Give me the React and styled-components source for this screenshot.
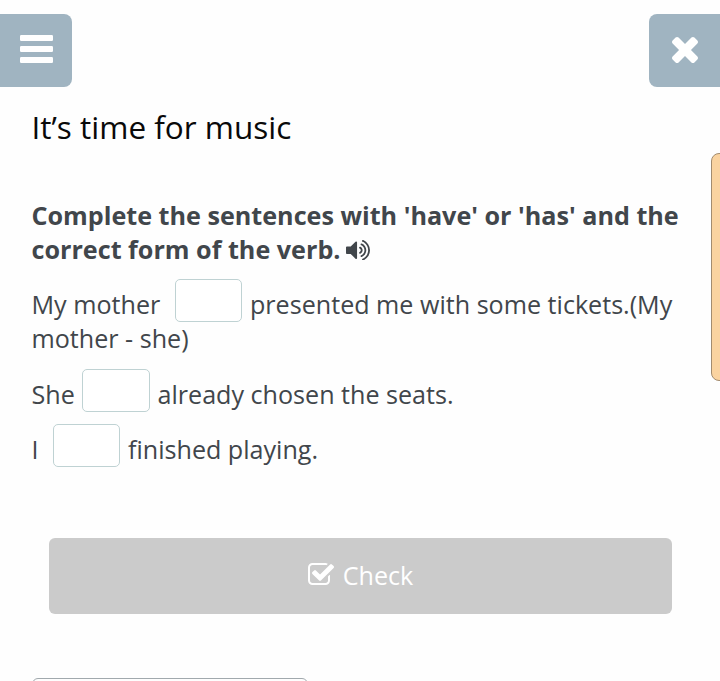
import React from "react";
import styled, { createGlobalStyle } from "styled-components";

const GlobalStyle = createGlobalStyle`
  *, *::before, *::after { box-sizing: border-box; }
  body {
    margin: 0;
    background: #fefefe;
    overflow: hidden;
    font-family: "Open Sans", "Noto Sans", sans-serif;
    color: #41464b;
  }
`;
const Page = styled.div`
  position: relative;
  width: 720px;
  height: 681px;
  overflow: hidden;
  padding-top: 14px;
`;
const TopBar = styled.header`
  display: flex;
  justify-content: space-between;
`;
const CornerButton = styled.button`
  width: ${(p) => (p.$side === "left" ? 72 : 71)}px;
  height: 73px;
  padding: ${(p) => (p.$side === "left" ? "0 0 3px" : "0 0 1px")};
  border: 0;
  border-radius: ${(p) => (p.$side === "left" ? "0 8px 8px 0" : "8px 0 0 8px")};
  background: #a0b4c1;
  color: #fff;
  display: flex;
  align-items: center;
  justify-content: center;
`;
const Glyph = styled.svg`
  fill: currentColor;
  flex: none;
`;
const SoundGlyph = styled(Glyph)`
  vertical-align: -1px;
  margin-left: -1px;
`;
const Main = styled.main`
  padding: 0 32px;
`;
const Title = styled.h1`
  margin: 18px 0 0 -0.5px;
  font-size: 31.5px;
  line-height: 44px;
  font-weight: 400;
  color: #090909;
`;
const Instruction = styled.p`
  margin: 49px 0 0 -0.5px;
  font-size: 25.16px;
  line-height: 34px;
  font-weight: 700;
  white-space: nowrap;
`;
const Sentence = styled.p`
  margin: 0 0 0 -0.5px;
  padding-top: ${(p) => p.$top}px;
  font-size: 25.12px;
  line-height: 34px;
  white-space: nowrap;
`;
const Row = styled.span`
  display: flex;
  height: 42px;
`;
const Words = styled.span`
  width: ${(p) => (p.$width ? p.$width + "px" : "auto")};
  padding-top: 8px;
`;
const Blank = styled.input`
  flex: none;
  width: ${(p) => p.$width || 67}px;
  height: 43px;
  padding: 0;
  margin-right: ${(p) => p.$gap || 8}px;
  border: 1px solid #bfd2d3;
  border-radius: 5px;
  background: #fff;
`;
const CheckButton = styled.button`
  display: flex;
  align-items: center;
  justify-content: center;
  gap: 9px;
  width: 623px;
  height: 76px;
  padding: 0 0 2px;
  margin: 72px 0 0 17px;
  border: 0;
  border-radius: 6px;
  background: #cbcbcb;
  color: #fff;
  font: 400 25.12px/34px "Open Sans", sans-serif;

  svg { margin-top: -3px; }
`;
const NextField = styled.div`
  width: 276px;
  height: 60px;
  margin-top: 64px;
  border: 1px solid #a1a9ad;
  border-radius: 6px;
`;
const SideTab = styled.aside`
  position: absolute;
  top: 153px;
  left: 711px;
  width: 20px;
  height: 228px;
  border: 1px solid #a38c70;
  border-radius: 8px;
  background: #fad3a0;
`;

const MenuIcon = () => (
  <Glyph width="33" height="28" viewBox="0 0 33 28">
    <rect width="33" height="6" rx="1.2" />
    <rect y="11" width="33" height="6" rx="1.2" />
    <rect y="22" width="33" height="6" rx="1.2" />
  </Glyph>
);
const CloseIcon = () => (
  <Glyph width="26" height="26" viewBox="110 366 1188 1188">
    <path d="M1298 1322q0 40-28 68l-136 136q-28 28-68 28t-68-28l-294-294-294 294q-28 28-68 28t-68-28l-136-136q-28-28-28-68t28-68l294-294-294-294q-28-28-28-68t28-68l136-136q28-28 68-28t68 28l294 294 294-294q28-28 68-28t68 28l136 136q28 28 28 68t-28 68l-294 294 294 294q28 28 28 68z" />
  </Glyph>
);
const SoundIcon = () => (
  <SoundGlyph width="24" height="20.5" viewBox="64 185 1664 1422">
    <path d="M832 352v1088q0 26-19 45t-45 19-45-19l-333-333h-262q-26 0-45-19t-19-45v-384q0-26 19-45t45-19h262l333-333q19-19 45-19t45 19 19 45zm384 544q0 76-42.5 141.5t-112.5 93.5q-10 5-25 5-26 0-45-18.5t-19-45.5q0-21 12-35.5t29-25 34-23 29-36 12-56.5-12-56.5-29-36-34-23-29-25-12-35.5q0-27 19-45.5t45-18.5q15 0 25 5 70 27 112.5 93t42.5 142zm256 0q0 153-85 282.5t-225 188.5q-13 5-25 5-27 0-46-19t-19-45q0-39 39-59 56-29 76-44 74-54 115.5-135.5t41.5-173.5-41.5-173.5-115.5-135.5q-20-15-76-44-39-20-39-59 0-26 19-45t45-19q13 0 26 5 140 59 225 188.5t85 282.5zm256 0q0 230-127 422.5t-338 283.5q-13 5-26 5-26 0-45-19t-19-45q0-36 39-59 7-4 22.5-10.5t22.5-10.5q46-25 82-51 123-91 192-227t69-289-69-289-192-227q-36-26-82-51-7-4-22.5-10.5t-22.5-10.5q-39-23-39-59 0-26 19-45t45-19q13 0 26 5 211 91 338 283.5t127 422.5z" />
  </SoundGlyph>
);
const CheckIcon = () => (
  <Glyph width="26" height="22" viewBox="64 128 1663 1408">
    <path d="M1472 930v318q0 119-84.5 203.5t-203.5 84.5h-832q-119 0-203.5-84.5t-84.5-203.5v-832q0-119 84.5-203.5t203.5-84.5h832q63 0 117 25 15 7 18 23 3 17-9 29l-49 49q-10 10-23 10-3 0-9-2-23-6-45-6h-832q-66 0-113 47t-47 113v832q0 66 47 113t113 47h832q66 0 113-47t47-113v-254q0-13 9-22l64-64q10-10 23-10 6 0 12 3 20 8 20 29zm231-489l-814 814q-24 24-57 24t-57-24l-430-430q-24-24-24-57t24-57l110-110q24-24 57-24t57 24l263 263 647-647q24-24 57-24t57 24l110 110q24 24 24 57t-24 57z" />
  </Glyph>
);

export default function App() {
  return (
    <Page>
      <GlobalStyle />
      <TopBar>
        <CornerButton $side="left" aria-label="Menu"><MenuIcon /></CornerButton>
        <CornerButton $side="right" aria-label="Close"><CloseIcon /></CornerButton>
      </TopBar>
      <Main>
        <Title>It’s time for music</Title>
        <Instruction>
          Complete the sentences with 'have' or 'has' and the<br />
          correct form of the verb. <SoundIcon />
        </Instruction>
        <Sentence $top={13}>
          <Row><Words $width={143.5}>My mother</Words><Blank aria-label="Answer 1" /><Words>presented me with some tickets.(My</Words></Row>
          mother - she)
        </Sentence>
        <Sentence $top={14}>
          <Row><Words $width={50.5}>She</Words><Blank $width={68} $gap={7.5} aria-label="Answer 2" /><Words>already chosen the seats.</Words></Row>
        </Sentence>
        <Sentence $top={13}>
          <Row><Words $width={21.5}>I</Words><Blank aria-label="Answer 3" /><Words>finished playing.</Words></Row>
        </Sentence>
        <CheckButton>
          <CheckIcon />
          Check
        </CheckButton>
        <NextField />
      </Main>
      <SideTab />
    </Page>
  );
}
